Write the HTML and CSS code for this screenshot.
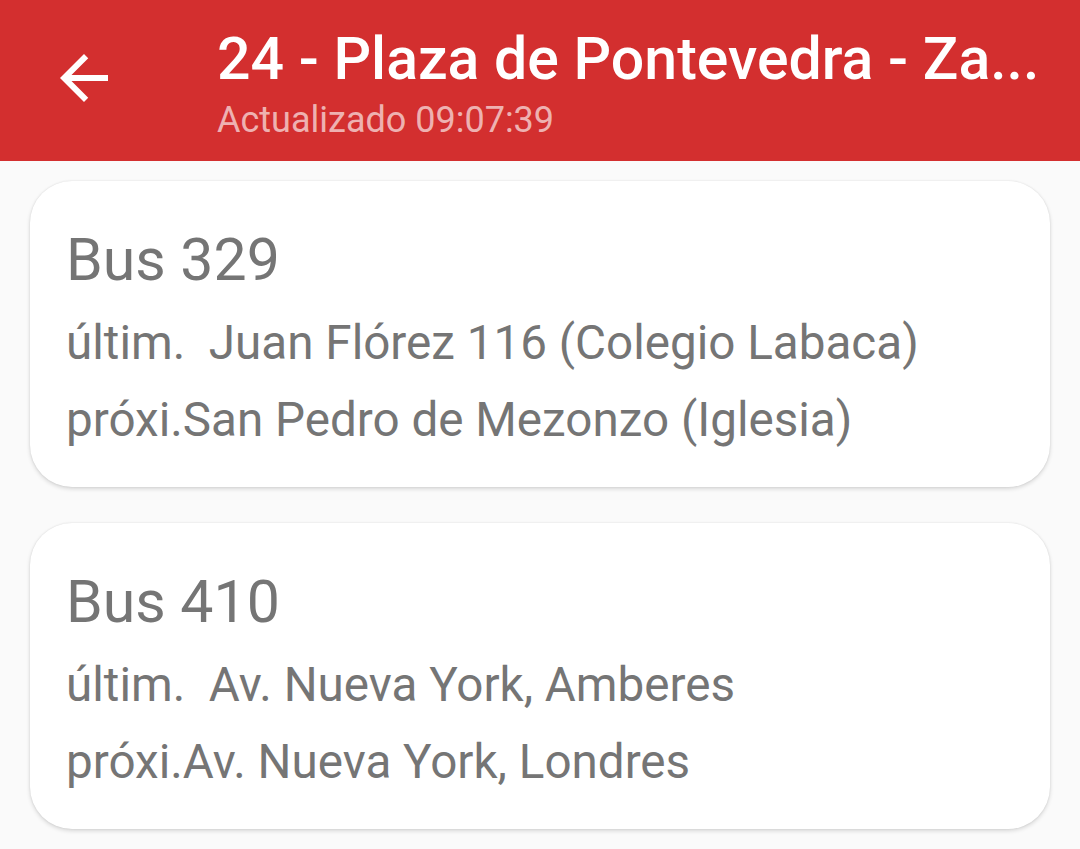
FILE: index.html
```html
<!DOCTYPE html>
<html lang="es">
<head>
<meta charset="utf-8">
<title>24 - Plaza de Pontevedra</title>
<link rel="stylesheet" href="styles.css">
</head>
<body>
<header class="appbar">
  <div class="nav">
    <svg class="back" viewBox="0 0 24 24" width="72" height="72" aria-hidden="true"><path fill="#fff" d="M20 11H7.83l5.59-5.59L12 4l-8 8 8 8 1.41-1.41L7.83 13H20v-2z"/></svg>
  </div>
  <div class="titles">
    <div class="title">24 - Plaza de Pontevedra - Za...</div>
    <div class="subtitle">Actualizado 09:07:39</div>
  </div>
</header>
<main class="list">
  <section class="card">
    <div class="bus">Bus 329</div>
    <div class="stop">últim.  Juan Flórez 116 (Colegio Labaca)</div>
    <div class="stop">próxi.San Pedro de Mezonzo (Iglesia)</div>
  </section>
  <section class="card">
    <div class="bus">Bus 410</div>
    <div class="stop">últim.  Av. Nueva York, Amberes</div>
    <div class="stop">próxi.Av. Nueva York, Londres</div>
  </section>
</main>
</body>
</html>
```
FILE: styles.css
```css
html, body {
  margin: 0;
  padding: 0;
}
body {
  background: #fafafa;
  font-family: Roboto, "Noto Sans", "Liberation Sans", sans-serif;
  width: 1080px;
  height: 849px;
  overflow: hidden;
}
.appbar {
  background: #d32f2f;
  height: 161px;
  display: flex;
  box-sizing: border-box;
}
.nav {
  width: 217px;
  flex: none;
  padding: 42px 0 0 48px;
  box-sizing: border-box;
}
.back {
  display: block;
}
.titles {
  flex: 1;
  min-width: 0;
  padding: 24px 20px 0 0;
}
.title {
  color: #fff;
  font-size: 59px;
  font-weight: 500;
  line-height: 70px;
  white-space: nowrap;
}
.subtitle {
  color: rgba(255, 255, 255, 0.64);
  font-size: 36px;
  line-height: 42px;
  margin-top: 5px;
}
.list {
  display: flex;
  flex-direction: column;
  gap: 36px;
  padding: 20px 30px;
}
.card {
  background: #fff;
  border-radius: 42px;
  padding: 45px 38px 28px 36px;
  box-shadow: 0 2px 4px rgba(0, 0, 0, 0.14), 0 0 2px rgba(0, 0, 0, 0.1);
  color: #757575;
}
.bus {
  font-size: 59px;
  line-height: 68px;
  margin-bottom: 11px;
}
.stop {
  font-size: 47.6px;
  line-height: 77px;
  white-space: pre;
}
```
